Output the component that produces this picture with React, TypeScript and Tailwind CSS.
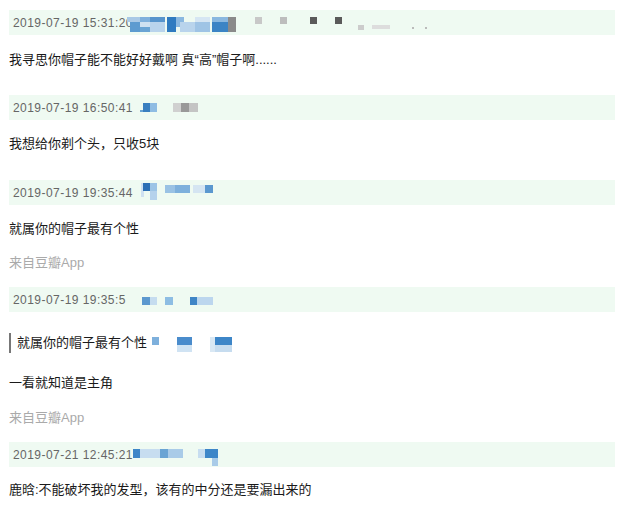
type Block = [number, number, number, number, string];

// censor mosaics, coords relative to the header bar (bar left = 9)
const mosaics: Block[][] = [
  [
    [118, 7, 13, 5, "#a9c9e6"],
    [121, 12, 10, 10, "#5d9bd0"],
    [131, 7, 10, 5, "#7fb0dc"],
    [131, 12, 10, 5, "#cfe1f1"],
    [131, 17, 10, 5, "#6aa4d4"],
    [141, 7, 15, 5, "#5795cc"],
    [141, 12, 15, 10, "#b9d4ec"],
    [158, 7, 9, 15, "#2f7bc0"],
    [167, 7, 8, 10, "#8ab8e0"],
    [171, 12, 15, 10, "#b9d4ec"],
    [186, 7, 15, 5, "#d6e6f3"],
    [186, 12, 15, 10, "#9fc4e5"],
    [203, 7, 16, 5, "#8ab8e0"],
    [203, 12, 16, 10, "#3b84c5"],
    [219, 7, 8, 15, "#8a8a8a"],
    [246, 7, 7, 7, "#c8c8c8"],
    [271, 7, 7, 7, "#bdbdbd"],
    [301, 7, 7, 7, "#5a5a5a"],
    [326, 7, 7, 7, "#5a5a5a"],
    [349, 15, 6, 5, "#cccccc"],
    [363, 15, 18, 4, "#dddddd"],
    [403, 17, 2, 2, "#bbbbbb"],
    [416, 17, 2, 2, "#bbbbbb"],
  ],
  [
    [131, 15, 3, 2, "#6aa4d4"],
    [134, 8, 7, 9, "#3a7fc0"],
    [141, 8, 7, 9, "#8fbce3"],
    [164, 8, 8, 9, "#d0d0d0"],
    [172, 8, 8, 9, "#999999"],
    [180, 8, 9, 9, "#c4c4c4"],
  ],
  [
    [132, 3, 3, 14, "#cfe1f1"],
    [134, 3, 7, 8, "#2c6fb5"],
    [141, 3, 7, 8, "#9cc4e6"],
    [141, 11, 7, 9, "#b5d2ec"],
    [156, 5, 10, 8, "#9ac2e4"],
    [166, 5, 15, 8, "#7eb0dc"],
    [184, 5, 12, 8, "#d5e5f2"],
    [196, 5, 8, 8, "#5b98cf"],
  ],
  [
    [133, 10, 8, 8, "#5c98cf"],
    [141, 10, 7, 8, "#c5dcef"],
    [156, 10, 8, 8, "#8dbde3"],
    [181, 10, 7, 8, "#3f85c6"],
    [188, 10, 16, 8, "#bcd6ee"],
  ],
  [
    [124, 7, 7, 9, "#3d86c8"],
    [131, 7, 20, 9, "#c7ddf0"],
    [151, 7, 8, 9, "#6aa4d4"],
    [159, 7, 15, 9, "#a9cbe8"],
    [189, 7, 7, 9, "#c7ddf0"],
    [196, 7, 13, 9, "#3d86c8"],
    [203, 16, 6, 8, "#a9cbe8"],
  ],
];

const quoteMosaic: Block[] = [
  [141, 4, 7, 8, "#7eb0dc"],
  [166, 4, 15, 8, "#4a8ccc"],
  [166, 12, 15, 7, "#d0e3f3"],
  [199, 4, 6, 15, "#d9e8f4"],
  [204, 4, 17, 8, "#3d86c8"],
  [204, 12, 17, 7, "#c6dcef"],
];

function Mosaic({ blocks, w, h }: { blocks: Block[]; w: number; h: number }) {
  return (
    <svg className="absolute left-0 top-0" width={w} height={h}>
      {blocks.map(([x, y, bw, bh, c], i) => (
        <rect key={i} x={x} y={y} width={bw} height={bh} fill={c} />
      ))}
    </svg>
  );
}

function Header({ time, idx, className }: { time: string; idx: number; className?: string }) {
  return (
    <div className={"relative flex h-[25px] items-center bg-[#effaf2] pl-[4px] text-[12px] tracking-[0.45px] text-[#666] " + (className ?? "")}>
      <span>{time}</span>
      <Mosaic blocks={mosaics[idx]} w={607} h={25} />
    </div>
  );
}

const line = "h-[20px] leading-[20px] text-[13px] text-[#1a1a1a]";
const fromApp = "h-[20px] leading-[20px] text-[13px] text-[#aaa]";

export default function App() {
  return (
    <div
      className="flex h-[513px] w-[620px] flex-col bg-white pl-[9px] pr-[5px] pt-[10px]"
      style={{ fontFamily: '"Liberation Sans", "Noto Sans CJK SC", sans-serif' }}
    >
      <Header time="2019-07-19 15:31:20" idx={0} />
      <div className={line + " mt-[15px]"}>我寻思你帽子能不能好好戴啊 真“高”帽子啊......</div>

      <Header time="2019-07-19 16:50:41" idx={1} className="mt-[25px]" />
      <div className={line + " mt-[14px]"}>我想给你剃个头，只收5块</div>

      <Header time="2019-07-19 19:35:44" idx={2} className="mt-[26px]" />
      <div className={line + " mt-[14px]"}>就属你的帽子最有个性</div>
      <div className={fromApp + " mt-[14px]"}>来自豆瓣App</div>

      <Header time="2019-07-19 19:35:5" idx={3} className="mt-[14px]" />
      <div className="relative mt-[21px] flex h-[20px] items-center border-l-2 border-[#777] pl-[6px] text-[13px] text-[#1a1a1a]">
        <span>就属你的帽子最有个性</span>
        <Mosaic blocks={quoteMosaic} w={300} h={20} />
      </div>
      <div className={line + " mt-[20px]"}>一看就知道是主角</div>
      <div className={fromApp + " mt-[15px]"}>来自豆瓣App</div>

      <Header time="2019-07-21 12:45:21" idx={4} className="mt-[14px]" />
      <div className={line + " mt-[13px]"}>鹿晗:不能破坏我的发型，该有的中分还是要漏出来的</div>
    </div>
  );
}
